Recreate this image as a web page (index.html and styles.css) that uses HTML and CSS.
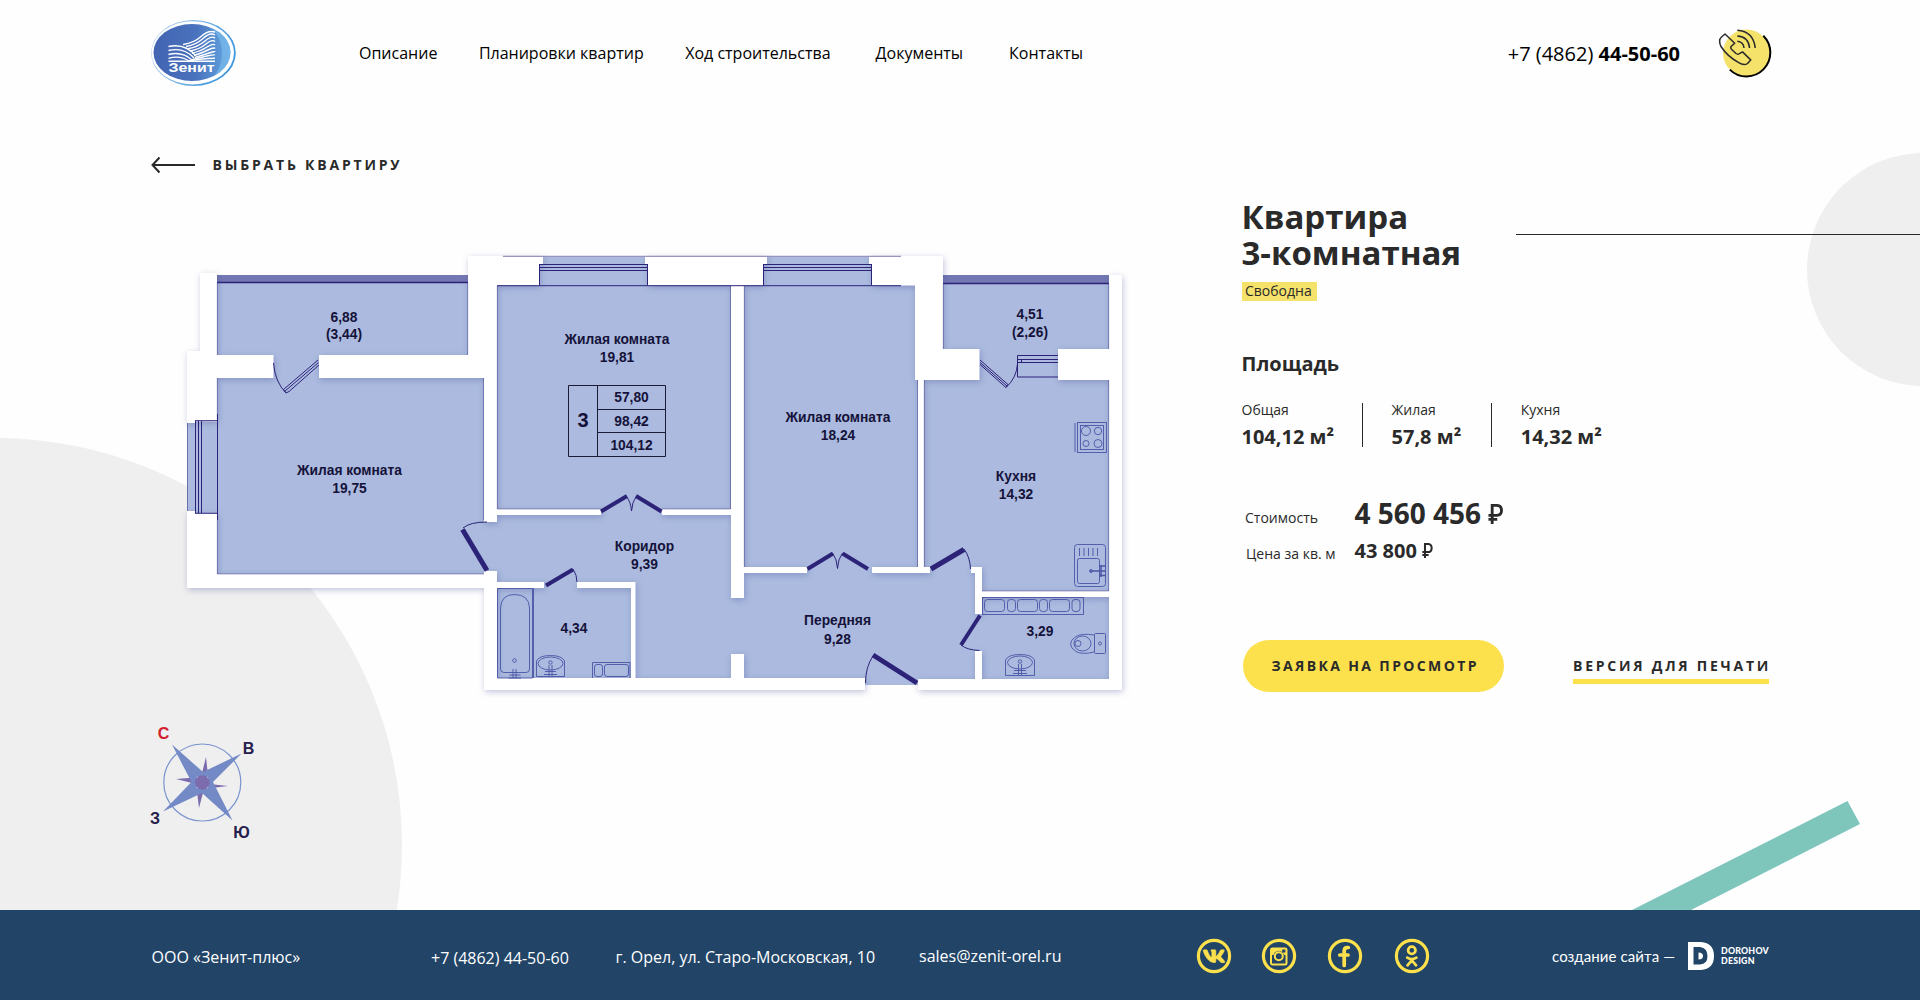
FILE: index.html
```html
<!DOCTYPE html>
<html lang="ru">
<head>
<meta charset="utf-8">
<title>Квартира 3-комнатная — Зенит</title>
<link rel="stylesheet" href="styles.css">
</head>
<body>
<div class="page">
  <svg class="decor" viewBox="0 0 1920 910" aria-hidden="true">
    <circle cx="-5" cy="845" r="407" fill="#efefef"/>
    <circle cx="1923.5" cy="269.5" r="116.5" fill="#efefef"/>
    <path d="M1516 234.5H1920" stroke="#2a2a2a"/>
    <path d="M1632 910L1847.500 801L1860 824L1691 910Z" fill="#7ec5bb"/>
  </svg>

  <header class="header">
    <a class="logo" href="#">
      <svg width="86" height="68" viewBox="151 19 86 68">
        <defs>
          <linearGradient id="lg" x1="0" y1="0" x2="1" y2="0"><stop offset="0" stop-color="#4264b2"/><stop offset=".55" stop-color="#4a72bd"/><stop offset="1" stop-color="#62a8e2"/></linearGradient>
          <linearGradient id="lr" x1="0" y1="0" x2="1" y2=".4"><stop offset="0" stop-color="#b9d3f0"/><stop offset="1" stop-color="#3f97dd"/></linearGradient>
          <clipPath id="lc"><ellipse cx="192" cy="52.500" rx="38.500" ry="28.500"/></clipPath>
        </defs>
        <ellipse cx="193.500" cy="53" rx="42.300" ry="33" fill="url(#lr)"/>
        <ellipse cx="192.800" cy="52.800" rx="41.200" ry="31.600" fill="#fff"/>
        <ellipse cx="192" cy="52.500" rx="38.500" ry="28.500" fill="url(#lg)"/>
        <path clip-path="url(#lc)" d="M202 22Q222 32 222 54Q222 72 206 84H240V20Z" fill="#7cbcec" opacity=".65"/>
        <g fill="none" stroke="#fff" stroke-width="1.400">
          <path d="M168.500 46.500Q185 43 195.500 55.500"/><path d="M168.500 50.500Q184 47 194 58"/><path d="M168.500 54.500Q182 51 192 60"/><path d="M168.500 58.300Q180 55 189 61"/><path d="M168.500 61.300H215"/>
          <path d="M183 44.500Q194 43 201 36.500T215 32"/><path d="M186 46.500Q196 45 203 38.500T215 35"/><path d="M188 48.700Q198 47 205 41T215 38.200"/><path d="M190 51Q200 49 206 44T215 41.500"/><path d="M192 53.300Q201 51 207 47T215 45"/><path d="M194 55.500Q202 53 208 50T215 48.500"/><path d="M195 57.500Q203 55 209 53T215 52"/><path d="M192 59.700Q202 57 208 55.700T215 55"/><path d="M188 61Q200 58.800 215 58.300"/>
        </g>
        <text x="168.500" y="72.300" textLength="46" lengthAdjust="spacingAndGlyphs" class="logo-text">Зенит</text>
      </svg>
    </a>
    <nav class="nav">
      <a href="#">Описание</a><a href="#">Планировки квартир</a><a href="#">Ход строительства</a><a href="#">Документы</a><a href="#">Контакты</a>
    </nav>
    <a class="phone" href="#">+7 (4862) <b>44-50-60</b></a>
    <a class="call" href="#" aria-label="Позвонить">
      <svg width="54" height="50" viewBox="1718 28 54 50" fill="none">
        <circle cx="1746.500" cy="53" r="23.500" fill="#f5e26b"/>
        <path d="M1763.300 35.800A23.600 23.600 0 0 1 1729.800 69.600" stroke="#000" stroke-width="2"/>
        <g stroke="#2a2a2a" stroke-width="1.500" stroke-linejoin="round">
          <path d="M1725 34L1734.700 43.200L1731.300 46.300Q1730.300 47.300 1731.200 49L1736 53.500Q1737.500 54.600 1739 53.900L1742.500 51.900L1750.700 59.900L1747.500 63.500Q1744 66 1738.700 62.700Q1727 56 1721 46.500Q1718 40 1721.500 37Z"/>
          <path d="M1737.300 30.300Q1753.500 31.500 1755.200 48M1737.300 35.900Q1748.500 36.500 1749.600 48M1737.300 41.300Q1743.500 42 1744 48"/>
        </g>
      </svg>
    </a>
  </header>

  <main class="main">
    <a class="back" href="#">
      <svg width="44" height="18" viewBox="0 0 44 18" fill="none" stroke="#2a2a2a" stroke-width="2"><path d="M44 9H1.500M8.500 1.500L1.500 9L8.500 16.500"/></svg>
      <span>ВЫБРАТЬ КВАРТИРУ</span>
    </a>

    <div class="columns">
      <section class="visual">
        <svg class="plan" width="960" height="460" viewBox="180 240 960 460">
          <path class="floor" d="M217 275H468V257H943V275H1109V680H918V685H864V680H497V575H217V513H187V422H217Z"/>
          <g class="band">
            <rect x="217" y="275" width="251" height="8"/><rect x="943" y="275" width="166" height="9"/>
          </g>
          <path class="ink thick" d="M217 282.500H468M943 283.500H1109"/>

          <g class="walls">
            <path d="M200 273H217V351H200Z"/>
            <path d="M187 351H217V355H273.500V378H217V421H195V423H187Z"/>
            <path d="M187 511H195V513H217V574H484V571H497V582H544V588H497V678H865V690H484V588H187Z"/>
            <path d="M319 355H468V256H543V264H539V285.500H497V509H601V515H497V522H484V378H319Z"/>
            <path d="M645 256H767V264H763V285.500H744V567H807V573H744V598H731V515H662V509H731V285.500H648V264H645Z"/>
            <path d="M869 256H943V349H979.500V380H924V567H930V573H872V567H918V380H915V285.500H872V264H869Z"/>
            <path d="M1109 275H1122V690H918V679H975V651H982V679H1109V597H982V614H975V573H971V567H982V591H1109V380H1058V349H1109Z"/>
            <path d="M577 582H635.500V678H631V588H577Z"/>
            <path d="M731 654H744V679H731Z"/>
          </g>

          <g class="ink thin">
            <path d="M497 285.700H901M539 264.500H648M539 267.500H648M539 270.500H648M539.500 264V285M647.500 264V285M763 264.500H872M763 267.500H872M763 270.500H872M763.500 264V285M871.500 264V285"/>
            <path d="M503 256.300H901" opacity=".6"/>
            <path d="M217.500 414V520M195.500 421V513M198.500 421V513M201.500 421V513M195 420.700H217M195 513.300H217"/>
            <path d="M187.500 423V511" opacity=".5"/>
            <path d="M943.300 284V349M1108.700 284V349M217.300 283V355M467.700 283V355M217.300 378V420M217.300 520V574H484M483.500 378V520M497.300 286V509H601M730.500 286V509H662M744.300 286V567M917.500 380V567M924.300 380V567M1108.700 380V591H982" opacity=".4"/>
          </g>

          <g class="ink thin" fill="none">
            <path d="M273.500 363Q275 382 286 393L289 391.500L319 365M286 393L283.500 389.500L318 360M284.500 391.500L318.500 362.500"/>
            <path d="M463 528Q470 522 487 522M626 496Q631 502 631.500 511Q632 502 636.500 496M573 569Q577 575 577 582M832.500 553Q837 559 837.500 568.500Q838 559 842.500 553M964 549Q970 557 970.500 569M961 645Q967 650 979.500 650.500M873 656Q865.500 667 865.500 683"/>
            <path d="M980 360L1008 384.500L1006 387.500L980 364.500M980 362.500L1007 386M1006 387.500Q1016.500 378 1017.500 364"/>
            <path d="M1058 355.500H1017.500V377H1058M1017.500 359.500H1058M1017.500 362.500H1058M1021.500 359.500V362.500"/>
          </g>
          <g class="ink doors">
            <path stroke-width="5" d="M462.500 529.500L487 570.500M873 655L917 683M931 569L964 549.500"/>
            <path stroke-width="4" d="M601 511.500L627 496M636 496L661.500 511.500M546 585.500L573 569.500M807.500 569L833 553.500M842.500 553.500L868 569M980 615.500L961 645"/>
          </g>

          <g class="fixture">
            <rect x="1077.500" y="422.500" width="29" height="30"/><rect x="1080.500" y="425.500" width="23" height="24"/><path d="M1075 423V452"/>
            <circle cx="1086" cy="431" r="4.500"/><circle cx="1098" cy="431" r="3.700"/><circle cx="1086" cy="443.500" r="3"/><circle cx="1098" cy="443.500" r="4"/>
            <rect x="1074.500" y="544.500" width="31" height="42" rx="3"/><rect x="1077.500" y="558.500" width="22" height="25" rx="2"/>
            <path d="M1079.500 548V556M1084 548V556M1088.500 548V556M1093 548V556M1097.500 548V556"/>
            <path stroke-width="1.500" d="M1090 571H1105M1099 566H1105M1099 575.500H1105M1101 565V577"/><circle cx="1091" cy="571" r="1.500"/>
            <path d="M497.500 588.500H532.500V678H497.500ZM533.500 588V678M500.500 608Q501 594.500 514.500 594.500Q529 594.500 529.500 608V669Q529.500 672.500 526 672.500H504Q500.500 672.500 500.500 669Z"/>
            <circle cx="514.500" cy="660.500" r="1.800"/><path d="M513 669V678M516 669V678M509.500 675H520.500M508.500 678H521"/>
            <path d="M536.500 676.500V661Q539 655.500 550.500 655.500Q562 655.500 564.500 661V676.500Z"/><ellipse cx="550.500" cy="663.500" rx="12.500" ry="6.500"/><circle cx="550.500" cy="662.500" r="1.700"/><path d="M549 665V676M552 665V676M545 671.500H556M544 674.500H557"/>
            <path d="M1005.500 675.500V660Q1008 654.500 1020 654.500Q1032 654.500 1034.500 660V675.500Z"/><ellipse cx="1020" cy="662.500" rx="12.500" ry="6.500"/><circle cx="1020" cy="661.500" r="1.700"/><path d="M1018.500 664V675M1021.500 664V675M1014 670.500H1026M1013 673.500H1027"/>
            <path d="M592.500 678V662.500H630V678"/><rect x="594.500" y="664.500" width="8" height="12" rx="2.500"/><rect x="604.500" y="664.500" width="24" height="12" rx="2.500"/>
            <rect x="982.500" y="597.500" width="101" height="17"/>
            <rect x="984.500" y="599.500" width="20" height="12" rx="3"/><rect x="1007.500" y="599.500" width="8" height="12" rx="3"/><rect x="1017.500" y="599.500" width="20" height="12" rx="3"/><rect x="1039.500" y="599.500" width="8" height="12" rx="3"/><rect x="1049.500" y="599.500" width="20" height="12" rx="3"/><rect x="1072" y="599.500" width="8" height="12" rx="3"/>
            <rect x="1094.500" y="633.500" width="11" height="20" rx="1"/><circle cx="1100" cy="643.500" r="1.500"/>
            <path d="M1094 635Q1082 633 1076 636.500Q1070.500 640 1070.500 644T1076 651.500Q1082 655 1094 652"/><ellipse cx="1082.500" cy="643.500" rx="8.500" ry="7.500"/><circle cx="1078" cy="643.500" r="3"/>
          </g>

          <path class="table" d="M568.500 385.500H665.500V456.500H568.500ZM597.500 385V456M597.500 409.500H665M597.500 432.500H665"/>
          <g class="label">
            <text x="344" y="321.500">6,88</text><text x="344" y="339">(3,44)</text>
            <text x="349.500" y="474.500">Жилая комната</text><text x="349.500" y="492.500">19,75</text>
            <text x="617" y="343.500">Жилая комната</text><text x="617" y="361.500">19,81</text>
            <text x="631.500" y="401.500">57,80</text><text x="631.500" y="426">98,42</text><text x="631.500" y="450">104,12</text>
            <text class="rooms" x="583" y="427">3</text>
            <text x="838" y="422">Жилая комната</text><text x="838" y="440">18,24</text>
            <text x="1030" y="319">4,51</text><text x="1030" y="337">(2,26)</text>
            <text x="1016" y="481">Кухня</text><text x="1016" y="499">14,32</text>
            <text x="644.500" y="551">Коридор</text><text x="644.500" y="569">9,39</text>
            <text x="574" y="633">4,34</text>
            <text x="837.500" y="625">Передняя</text><text x="837.500" y="643.500">9,28</text>
            <text x="1040" y="635.500">3,29</text>
          </g>
        </svg>

        <svg class="compass" width="110" height="115" viewBox="149 725 110 115">
          <circle cx="202.300" cy="782.500" r="38.500" fill="none" stroke="#7a93cf" stroke-width="1.200"/>
          <path d="M206 757L209 784L228 786L204 789L199 808L196 784L176 779L201 777Z" fill="#7c6cae"/>
          <path d="M172 744.500L203 772L241.500 753.500L213 782L232.500 820.500L202 793L163 811.500L191.500 782Z" fill="#748ac6"/>
          <circle cx="202.300" cy="782.500" r="7.300" fill="#7c6cae" stroke="#c9cbe6" stroke-width="1" stroke-dasharray="1.800 9.670" stroke-dashoffset="-4.800"/>
          <g class="compass-text"><text class="north" x="163.500" y="739">С</text><text x="248.500" y="754">В</text><text x="155" y="823.500">З</text><text x="241.500" y="837.500">Ю</text></g>
        </svg>
      </section>

      <section class="info">
        <h1>Квартира<br>3-комнатная</h1>
        <span class="status">Свободна</span>
        <h2>Площадь</h2>
        <div class="areas">
          <div class="area"><span>Общая</span><b>104,12 м²</b></div>
          <div class="area"><span>Жилая</span><b>57,8 м²</b></div>
          <div class="area"><span>Кухня</span><b>14,32 м²</b></div>
        </div>
        <div class="price total"><span>Стоимость</span><b>4 560 456 <i>₽</i></b></div>
        <div class="price meter"><span>Цена за кв. м</span><b>43 800 <i>₽</i></b></div>
        <div class="actions">
          <a class="button" href="#">ЗАЯВКА НА ПРОСМОТР</a>
          <a class="print" href="#">ВЕРСИЯ ДЛЯ ПЕЧАТИ</a>
        </div>
      </section>
    </div>
  </main>

  <footer class="footer">
    <span class="company">ООО «Зенит-плюс»</span>
    <a class="tel" href="#">+7 (4862) 44-50-60</a>
    <span class="address">г. Орел, ул. Старо-Московская, 10</span>
    <a class="mail" href="#">sales@zenit-orel.ru</a>
    <div class="social">
      <a href="#" aria-label="ВКонтакте"><svg width="36" height="36" viewBox="0 0 36 36"><circle class="ring" cx="18" cy="18" r="15.600"/><path fill="#fce14d" stroke="#fce14d" stroke-width="14" transform="translate(6.500 8) scale(.04)" d="M545 117.700c3.700-12.500 0-21.700-17.800-21.700h-58.900c-15 0-21.900 7.900-25.600 16.700 0 0-30 73.100-72.400 120.500-13.700 13.700-20 18.100-27.500 18.100-3.700 0-9.400-4.400-9.400-16.900V117.700c0-15-4.200-21.700-16.600-21.700h-92.600c-9.400 0-15 7-15 13.500 0 14.200 21.200 17.500 23.400 57.500v86.800c0 19-3.400 22.500-10.900 22.500-20 0-68.600-73.400-97.400-157.400-5.800-16.300-11.500-22.900-26.600-22.900H38.800c-16.800 0-20.200 7.900-20.200 16.700 0 15.600 20 93.100 93.100 195.500C160.400 378.100 229 416 291.400 416c37.500 0 42.100-8.400 42.100-22.900 0-66.800-3.400-73.100 15.400-73.100 8.700 0 23.700 4.400 58.700 38.100 40 40 46.600 57.900 69 57.900h58.900c16.800 0 25.300-8.400 20.400-25-11.200-34.900-86.900-106.700-90.300-111.500-8.700-11.200-6.200-16.200 0-26.200.100-.100 72-101.300 79.400-135.600z"/></svg></a>
      <a href="#" aria-label="Instagram"><svg width="36" height="36" viewBox="0 0 36 36"><circle class="ring" cx="18" cy="18" r="15.600"/><rect x="10" y="10.500" width="15.500" height="16" rx="1.500" fill="none" stroke="#fce14d" stroke-width="2"/><path d="M10 10H25.500V17H10Z" fill="#fce14d"/><circle cx="17.800" cy="18.300" r="5.500" fill="#214467"/><circle cx="17.800" cy="18.300" r="4" fill="none" stroke="#fce14d" stroke-width="2"/><rect x="21.200" y="11.500" width="3.200" height="3" fill="#214467"/></svg></a>
      <a href="#" aria-label="Facebook"><svg width="36" height="36" viewBox="0 0 36 36"><circle class="ring" cx="18" cy="18" r="15.600"/><path d="M21.300 9.500H20.500C18.300 9.500 17.200 10.700 17.200 13V27.400M12.800 17H21" fill="none" stroke="#fce14d" stroke-width="3.700" stroke-linecap="round"/></svg></a>
      <a href="#" aria-label="Одноклассники"><svg width="36" height="36" viewBox="0 0 36 36"><circle class="ring" cx="18" cy="18" r="15.600"/><g fill="none" stroke="#fce14d" stroke-width="2.700" stroke-linecap="round"><circle cx="17.800" cy="12.300" r="3.700"/><path d="M13.200 19.600Q17.800 22.500 22.400 19.600M17.800 22.300L13.500 27.300M17.800 22.300L22.100 27.300"/></g></svg></a>
    </div>
    <span class="credit">создание сайта —</span>
    <a class="studio" href="#">
      <svg width="26" height="28" viewBox="0 0 26 28"><path fill="#fff" fill-rule="evenodd" d="M0 0H13Q26 1 26 14T13 28H0ZM5.500 5V22.500H12Q19.500 22 19.500 14T12 5ZM10.500 10.500Q15 10.500 15 14T10.500 17.500Z"/></svg>
      <span>DOROHOV<br>DESIGN</span>
    </a>
  </footer>
</div>
</body>
</html>
```
FILE: styles.css
```css
* { box-sizing: border-box; }
body {
  margin: 0;
  background: #fefefe;
  color: #2a2a2a;
  font-family: "Open Sans", sans-serif;
  font-size: 16px;
}
a { color: inherit; text-decoration: none; }
svg { display: block; }
h1, h2 { margin: 0; font-weight: 700; }

.page { position: relative; display: flex; flex-direction: column; height: 1000px; overflow: hidden; }
.decor { position: absolute; left: 0; top: 0; width: 1920px; height: 910px; }

.header {
  position: relative;
  display: flex;
  align-items: center;
  height: 106px;
  padding: 0 148px 0 151px;
  color: #000;
}
.logo-text { font: 700 12.500px "Liberation Sans", sans-serif; fill: #fff; }
.nav { display: flex; margin-left: 122px; }
.nav a + a { margin-left: 41.500px; }
.nav a:nth-child(4) { margin-left: 45px; }
.nav a:nth-child(5) { margin-left: 46px; }
.phone { margin-left: auto; font-size: 20px; }
.phone b { font-weight: 700; }
.call { margin-left: 38px; }

.main { position: relative; flex: 1; padding: 49px 0 0 151px; }
.back { display: flex; align-items: center; height: 20px; font-size: 14px; font-weight: 700; line-height: 20px; letter-spacing: 2.800px; }
.back span { margin-left: 17.500px; }

.columns { display: flex; }
.visual { width: 1090px; padding-top: 65px; }
.plan { margin-left: 29px; }
.compass { margin: 25px 0 0 -2px; }
.floor { fill: #abbade; }
.band { fill: #7377b3; }
.walls { fill: #fff; filter: drop-shadow(1px 2px 3px rgba(50, 60, 140, .3)); }
.ink { stroke: #2c2379; fill: none; }
.thick { stroke-width: 1.500; }
.thin { stroke-width: 1; }
.fixture { fill: none; stroke: #4a55a5; stroke-width: .9; }
.table { fill: none; stroke: #1b1b33; }
.label { font: 700 13.800px "Liberation Sans", sans-serif; fill: #15123a; text-anchor: middle; }
.label .rooms { font-size: 20px; }
.compass-text { font: 700 16px "Liberation Sans", sans-serif; fill: #25204d; text-anchor: middle; }
.compass-text .north { fill: #d3202e; }

.info { padding: 24px 0 0 .500px; }
h1 { font-size: 33px; line-height: 36px; }
.status {
  display: block;
  width: 75px;
  height: 19px;
  margin-top: 11px;
  padding-left: 3.500px;
  background: #f5e26b;
  font-size: 14px;
  line-height: 18px;
}
h2 { margin-top: 49px; font-size: 20px; line-height: 28px; }
.areas { display: flex; margin-top: 22px; }
.area { position: relative; display: flex; flex-direction: column; padding-right: 28px; }
.area + .area { padding-left: 29.500px; }
.area + .area::before { content: ""; position: absolute; left: 0; top: 3px; width: 1px; height: 44px; background: #2a2a2a; }
.area:nth-child(2) { padding-right: 30px; }
.area span { font-size: 14px; line-height: 20px; }
.area b { margin-top: 4px; font-size: 20px; line-height: 26px; }
.price { display: grid; grid-template-columns: 109.500px auto; }
.price i {
  display: inline-block;
  transform: scaleX(.82);
  transform-origin: 0 50%;
  font-family: Roboto, sans-serif;
  font-style: normal;
  font-weight: 500;
  line-height: 1;
}
.price span { font-size: 14px; line-height: 20px; }
.total { height: 36px; margin: 45px 0 0 3.500px; }
.total span { padding-top: 13px; }
.total b { font-size: 28px; line-height: 36px; }
.meter { height: 28px; margin: 6px 0 0 4.500px; grid-template-columns: 108.500px auto; }
.meter span { padding-top: 7px; }
.meter b { font-size: 20px; line-height: 28px; }
.actions { display: flex; margin: 75px 0 0 1.500px; }
.button, .print { font-size: 14px; font-weight: 700; }
.button {
  width: 261px;
  height: 52px;
  border-radius: 26px;
  background: #fce14d;
  letter-spacing: 2.370px;
  line-height: 52px;
  padding-left: 28.500px;
}
.print {
  align-self: flex-start;
  width: 196px;
  height: 44px;
  margin-left: 69px;
  border-bottom: 5px solid #fce14d;
  letter-spacing: 2.750px;
  line-height: 52px;
  white-space: nowrap;
}

.footer {
  position: relative;
  display: flex;
  align-items: center;
  height: 90px;
  padding: 2px 0 0 151px;
  background: #214467;
  color: #fff;
}
.company { width: 280px; padding: 2px 0 0 .500px; }
.tel { width: 184.500px; padding-top: 4px; }
.address { width: 303.500px; padding-top: 2px; }
.mail { width: 277px; }
.social { display: flex; gap: 30px; width: 356px; }
.social a:nth-child(1) { margin-right: -1px; }
.social a:nth-child(4) { margin-left: 1px; }
.ring { fill: none; stroke: #fce14d; stroke-width: 3.200; }
.credit { width: 136px; font: 15px Lato, sans-serif; letter-spacing: .1px; }
.studio { display: flex; align-items: center; gap: 7px; font: 900 8.800px/10px Lato, sans-serif; letter-spacing: .2px; }
```
